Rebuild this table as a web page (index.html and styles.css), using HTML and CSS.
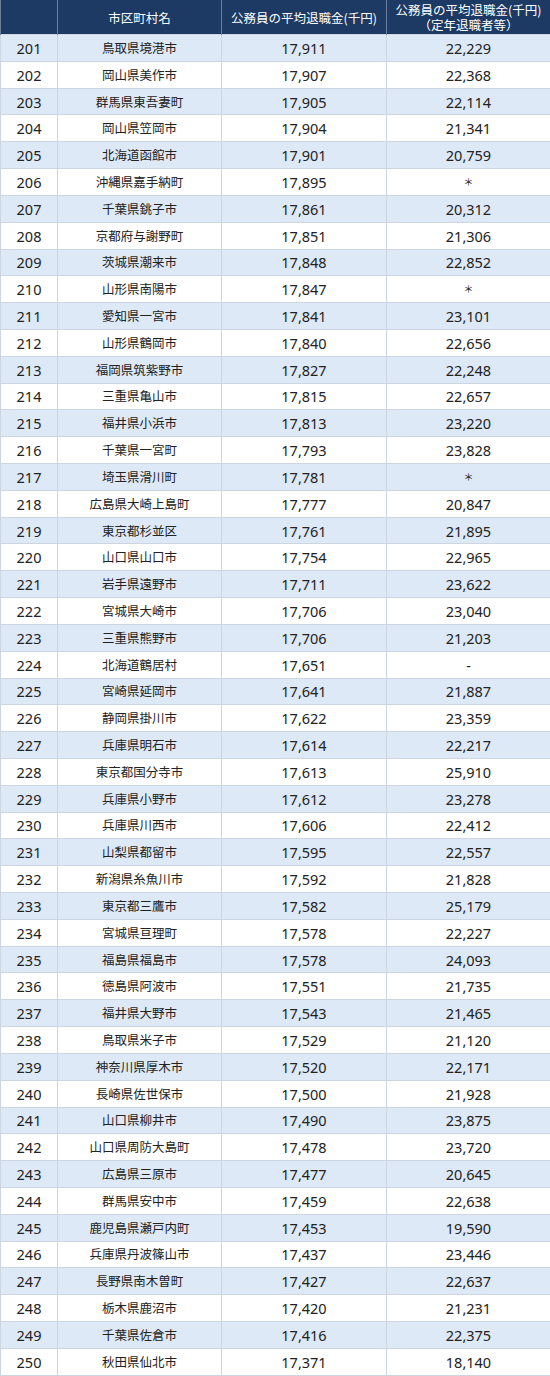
FILE: index.html
```html
<!DOCTYPE html>
<html lang="ja">
<head>
<meta charset="utf-8">
<title>公務員の平均退職金</title>
<link rel="stylesheet" href="styles.css">
</head>
<body>
<table class="ranking">
  <colgroup>
    <col class="c-rank"><col class="c-name"><col class="c-avg"><col class="c-ret">
  </colgroup>
  <thead>
    <tr>
      <th>&nbsp;</th>
      <th>市区町村名</th>
      <th>公務員の平均退職金(千円)</th>
      <th><span class="hl">公務員の平均退職金(千円)</span><span class="hl">（定年退職者等）</span></th>
    </tr>
  </thead>
  <tbody>
    <tr><td>201</td><td class="name">鳥取県境港市</td><td>17,911</td><td>22,229</td></tr>
    <tr><td>202</td><td class="name">岡山県美作市</td><td>17,907</td><td>22,368</td></tr>
    <tr><td>203</td><td class="name">群馬県東吾妻町</td><td>17,905</td><td>22,114</td></tr>
    <tr><td>204</td><td class="name">岡山県笠岡市</td><td>17,904</td><td>21,341</td></tr>
    <tr><td>205</td><td class="name">北海道函館市</td><td>17,901</td><td>20,759</td></tr>
    <tr><td>206</td><td class="name">沖縄県嘉手納町</td><td>17,895</td><td class="mark">＊</td></tr>
    <tr><td>207</td><td class="name">千葉県銚子市</td><td>17,861</td><td>20,312</td></tr>
    <tr><td>208</td><td class="name">京都府与謝野町</td><td>17,851</td><td>21,306</td></tr>
    <tr><td>209</td><td class="name">茨城県潮来市</td><td>17,848</td><td>22,852</td></tr>
    <tr><td>210</td><td class="name">山形県南陽市</td><td>17,847</td><td class="mark">＊</td></tr>
    <tr><td>211</td><td class="name">愛知県一宮市</td><td>17,841</td><td>23,101</td></tr>
    <tr><td>212</td><td class="name">山形県鶴岡市</td><td>17,840</td><td>22,656</td></tr>
    <tr><td>213</td><td class="name">福岡県筑紫野市</td><td>17,827</td><td>22,248</td></tr>
    <tr><td>214</td><td class="name">三重県亀山市</td><td>17,815</td><td>22,657</td></tr>
    <tr><td>215</td><td class="name">福井県小浜市</td><td>17,813</td><td>23,220</td></tr>
    <tr><td>216</td><td class="name">千葉県一宮町</td><td>17,793</td><td>23,828</td></tr>
    <tr><td>217</td><td class="name">埼玉県滑川町</td><td>17,781</td><td class="mark">＊</td></tr>
    <tr><td>218</td><td class="name">広島県大崎上島町</td><td>17,777</td><td>20,847</td></tr>
    <tr><td>219</td><td class="name">東京都杉並区</td><td>17,761</td><td>21,895</td></tr>
    <tr><td>220</td><td class="name">山口県山口市</td><td>17,754</td><td>22,965</td></tr>
    <tr><td>221</td><td class="name">岩手県遠野市</td><td>17,711</td><td>23,622</td></tr>
    <tr><td>222</td><td class="name">宮城県大崎市</td><td>17,706</td><td>23,040</td></tr>
    <tr><td>223</td><td class="name">三重県熊野市</td><td>17,706</td><td>21,203</td></tr>
    <tr><td>224</td><td class="name">北海道鶴居村</td><td>17,651</td><td>-</td></tr>
    <tr><td>225</td><td class="name">宮崎県延岡市</td><td>17,641</td><td>21,887</td></tr>
    <tr><td>226</td><td class="name">静岡県掛川市</td><td>17,622</td><td>23,359</td></tr>
    <tr><td>227</td><td class="name">兵庫県明石市</td><td>17,614</td><td>22,217</td></tr>
    <tr><td>228</td><td class="name">東京都国分寺市</td><td>17,613</td><td>25,910</td></tr>
    <tr><td>229</td><td class="name">兵庫県小野市</td><td>17,612</td><td>23,278</td></tr>
    <tr><td>230</td><td class="name">兵庫県川西市</td><td>17,606</td><td>22,412</td></tr>
    <tr><td>231</td><td class="name">山梨県都留市</td><td>17,595</td><td>22,557</td></tr>
    <tr><td>232</td><td class="name">新潟県糸魚川市</td><td>17,592</td><td>21,828</td></tr>
    <tr><td>233</td><td class="name">東京都三鷹市</td><td>17,582</td><td>25,179</td></tr>
    <tr><td>234</td><td class="name">宮城県亘理町</td><td>17,578</td><td>22,227</td></tr>
    <tr><td>235</td><td class="name">福島県福島市</td><td>17,578</td><td>24,093</td></tr>
    <tr><td>236</td><td class="name">徳島県阿波市</td><td>17,551</td><td>21,735</td></tr>
    <tr><td>237</td><td class="name">福井県大野市</td><td>17,543</td><td>21,465</td></tr>
    <tr><td>238</td><td class="name">鳥取県米子市</td><td>17,529</td><td>21,120</td></tr>
    <tr><td>239</td><td class="name">神奈川県厚木市</td><td>17,520</td><td>22,171</td></tr>
    <tr><td>240</td><td class="name">長崎県佐世保市</td><td>17,500</td><td>21,928</td></tr>
    <tr><td>241</td><td class="name">山口県柳井市</td><td>17,490</td><td>23,875</td></tr>
    <tr><td>242</td><td class="name">山口県周防大島町</td><td>17,478</td><td>23,720</td></tr>
    <tr><td>243</td><td class="name">広島県三原市</td><td>17,477</td><td>20,645</td></tr>
    <tr><td>244</td><td class="name">群馬県安中市</td><td>17,459</td><td>22,638</td></tr>
    <tr><td>245</td><td class="name">鹿児島県瀬戸内町</td><td>17,453</td><td>19,590</td></tr>
    <tr><td>246</td><td class="name">兵庫県丹波篠山市</td><td>17,437</td><td>23,446</td></tr>
    <tr><td>247</td><td class="name">長野県南木曽町</td><td>17,427</td><td>22,637</td></tr>
    <tr><td>248</td><td class="name">栃木県鹿沼市</td><td>17,420</td><td>21,231</td></tr>
    <tr><td>249</td><td class="name">千葉県佐倉市</td><td>17,416</td><td>22,375</td></tr>
    <tr><td>250</td><td class="name">秋田県仙北市</td><td>17,371</td><td>18,140</td></tr>
  </tbody>
</table>
</body>
</html>
```
FILE: styles.css
```css
html, body {
  margin: 0;
  padding: 0;
  background: #ffffff;
}

.ranking {
  width: 550px;
  table-layout: fixed;
  border-collapse: collapse;
  font-family: "Noto Sans", "Noto Sans CJK JP", sans-serif;
  color: #222222;
}

.c-rank { width: 57px; }
.c-name { width: 164px; }
.c-avg { width: 165px; }
.c-ret { width: 164px; }

.ranking th {
  height: 34px;
  padding: 0;
  background: #1c3a63;
  color: #ffffff;
  font-family: "Noto Sans CJK JP", sans-serif;
  font-weight: 400;
  font-size: 12.5px;
  line-height: 15px;
  text-align: center;
  vertical-align: middle;
  border-left: 1px solid #6b7f9c;
  border-right: 1px solid #6b7f9c;
}

.ranking th .hl {
  display: block;
  height: 15px;
  line-height: 15px;
  overflow: visible;
}

.ranking td {
  height: 25.82px;
  padding: 0;
  font-size: 14.5px;
  line-height: 16px;
  text-align: center;
  vertical-align: middle;
  border: 1px solid #cdd6e0;
}

.ranking tbody tr:nth-child(odd) td {
  background: #dde9f7;
}

.ranking td.name {
  font-family: "Noto Sans CJK JP", sans-serif;
  font-size: 12.5px;
}

.ranking td.mark {
  font-family: "Noto Sans CJK JP", sans-serif;
  font-size: 10px;
}
```
